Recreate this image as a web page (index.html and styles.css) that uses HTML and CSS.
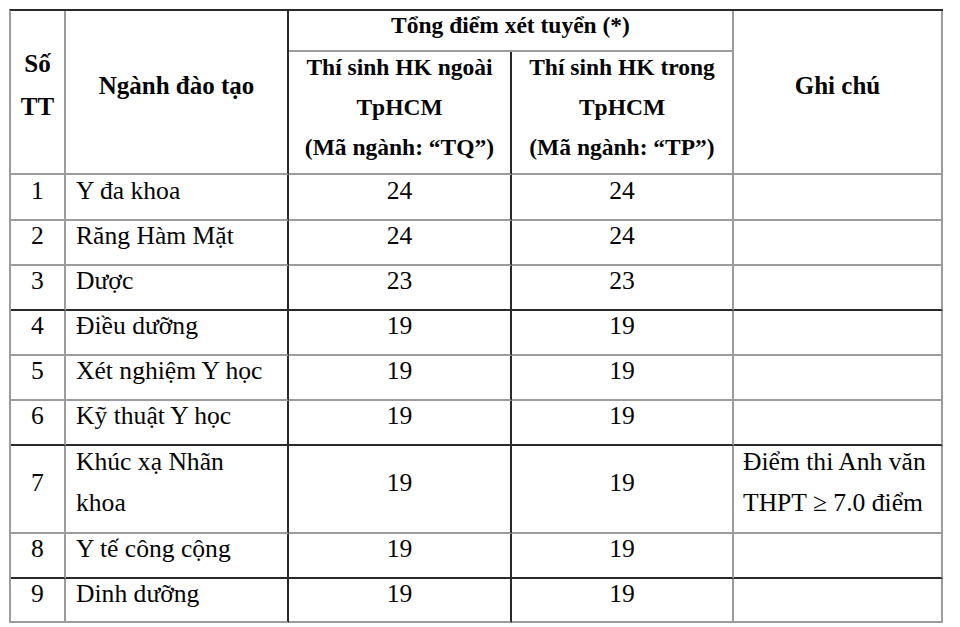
FILE: index.html
```html
<!DOCTYPE html>
<html lang="vi">
<head>
<meta charset="utf-8">
<title>Tổng điểm xét tuyển</title>
<link rel="stylesheet" href="styles.css">
</head>
<body>
<div class="page">
<table class="grid">
  <colgroup>
    <col class="w1"><col class="w2"><col class="w3"><col class="w4"><col class="w5">
  </colgroup>
  <thead>
    <tr class="h1">
      <th rowspan="2" class="big tt"><div class="c">Số<br>TT</div></th>
      <th rowspan="2" class="big dr"><div class="c">Ngành đào tạo</div></th>
      <th colspan="2" class="sub"><div class="c">Tổng điểm xét tuyển (*)</div></th>
      <th rowspan="2" class="big"><div class="c">Ghi chú</div></th>
    </tr>
    <tr class="h2">
      <th class="sub dr"><div class="c">Thí sinh HK ngoài<br>TpHCM<br>(Mã ngành: “TQ”)</div></th>
      <th class="sub"><div class="c">Thí sinh HK trong<br>TpHCM<br>(Mã ngành: “TP”)</div></th>
    </tr>
  </thead>
  <tbody>
    <tr class="r r1">
      <td class="n"><div class="c">1</div></td><td class="name dr"><div class="c">Y đa khoa</div></td>
      <td class="num dr"><div class="c">24</div></td><td class="num"><div class="c">24</div></td><td class="note"></td>
    </tr>
    <tr class="r">
      <td class="n"><div class="c">2</div></td><td class="name dr"><div class="c">Răng Hàm Mặt</div></td>
      <td class="num dr"><div class="c">24</div></td><td class="num"><div class="c">24</div></td><td class="note"></td>
    </tr>
    <tr class="r db">
      <td class="n"><div class="c">3</div></td><td class="name dr"><div class="c">Dược</div></td>
      <td class="num dr"><div class="c">23</div></td><td class="num"><div class="c">23</div></td><td class="note"></td>
    </tr>
    <tr class="r">
      <td class="n"><div class="c">4</div></td><td class="name dr"><div class="c">Điều dưỡng</div></td>
      <td class="num dr"><div class="c">19</div></td><td class="num"><div class="c">19</div></td><td class="note"></td>
    </tr>
    <tr class="r">
      <td class="n"><div class="c">5</div></td><td class="name dr"><div class="c">Xét nghiệm Y học</div></td>
      <td class="num dr"><div class="c">19</div></td><td class="num"><div class="c">19</div></td><td class="note"></td>
    </tr>
    <tr class="r db">
      <td class="n"><div class="c">6</div></td><td class="name dr"><div class="c">Kỹ thuật Y học</div></td>
      <td class="num dr"><div class="c">19</div></td><td class="num"><div class="c">19</div></td><td class="note"></td>
    </tr>
    <tr class="r r7">
      <td class="n"><div class="c">7</div></td><td class="name dr"><div class="c">Khúc xạ Nhãn<br>khoa</div></td>
      <td class="num dr"><div class="c">19</div></td><td class="num"><div class="c">19</div></td>
      <td class="note"><div class="c">Điểm thi Anh văn<br>THPT ≥ 7.0 điểm</div></td>
    </tr>
    <tr class="r db">
      <td class="n"><div class="c">8</div></td><td class="name dr"><div class="c">Y tế công cộng</div></td>
      <td class="num dr"><div class="c">19</div></td><td class="num"><div class="c">19</div></td><td class="note"></td>
    </tr>
    <tr class="r r9">
      <td class="n"><div class="c">9</div></td><td class="name dr"><div class="c">Dinh dưỡng</div></td>
      <td class="num dr"><div class="c">19</div></td><td class="num"><div class="c">19</div></td><td class="note"></td>
    </tr>
  </tbody>
</table>
</div>
</body>
</html>
```
FILE: styles.css
```css
html, body {
  margin: 0;
  padding: 0;
  background: #ffffff;
}

body {
  font-family: "Liberation Serif", "Times New Roman", serif;
  color: #050505;
}

.page {
  padding: 9px 0 0 9px;
}

.grid {
  border-collapse: separate;
  border-spacing: 0;
  table-layout: fixed;
  width: 934px;
  border-top: 2px solid #2a2a2a;
  border-left: 2px solid #9c9c9c;
}

.w1 { width: 55px; }
.w2 { width: 223px; }
.w3 { width: 223px; }
.w4 { width: 222px; }
.w5 { width: 209px; }

.grid th,
.grid td {
  padding: 0;
  border-right: 2px solid #9c9c9c;
  border-bottom: 2px solid #9c9c9c;
  vertical-align: middle;
  overflow: hidden;
  white-space: nowrap;
}

.grid .dr {
  border-right-color: #2a2a2a;
}

.grid tr.db td {
  border-bottom-color: #2a2a2a;
}

.c {
  margin: -10px 0 4px;
}

/* header */
.h1 { height: 41px; }
.h2 { height: 123px; }

.grid th {
  font-weight: bold;
  text-align: center;
}

.big {
  font-size: 25px;
  line-height: 41px;
}

.big.tt {
  line-height: 43px;
}

.sub {
  font-size: 23.5px;
  line-height: 40px;
}

.sub .c {
  margin: -8px 0 3px;
}

/* body rows */
.r { height: 45px; }
.r1 { height: 46px; }
.r7 { height: 88px; }
.r9 { height: 44px; }

.grid td {
  font-size: 25.6px;
  line-height: 41px;
}

.n, .num {
  text-align: center;
}

.name {
  padding-left: 10px !important;
  text-align: left;
}

.note {
  padding-left: 9px !important;
  text-align: left;
}
```
